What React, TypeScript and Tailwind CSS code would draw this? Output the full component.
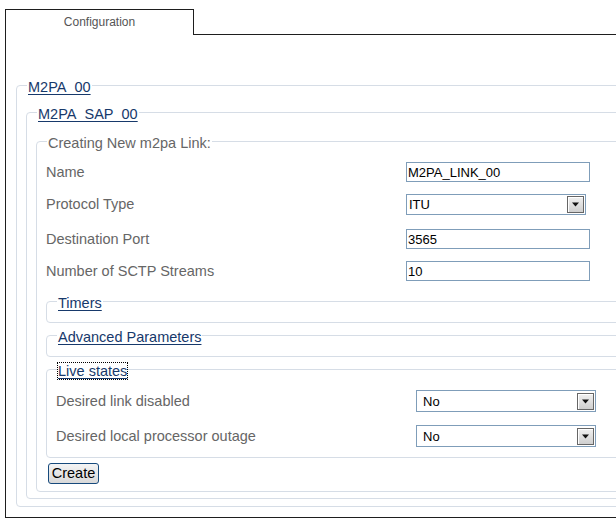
import React from "react";

function Fieldset({
  legend,
  link,
  focus,
  className,
  children,
}: {
  legend: string;
  link?: boolean;
  focus?: boolean;
  className?: string;
  children?: React.ReactNode;
}) {
  return (
    <fieldset className={"block border border-[#d6dde6] rounded-[4px] " + (className ?? "")}>
      <legend className="ml-[10px] px-[1px] pt-[3px] text-[14.5px] leading-[16px]">
        {link ? (
          <span
            className={
              "text-[#17396b] underline underline-offset-[2px] " +
              (focus ? "outline outline-1 outline-dotted outline-black" : "")
            }
          >
            {legend}
          </span>
        ) : (
          <span className="text-[#666]">{legend}</span>
        )}
      </legend>
      {children}
    </fieldset>
  );
}

function Arrow() {
  return (
    <div className="w-[17px] h-[17px] border border-[#666] bg-gradient-to-b from-[#f0f0f0] to-[#cfcfcf] shadow-[inset_1px_1px_0_#ffffff] flex items-center justify-center">
      <svg width="9" height="5" viewBox="0 0 9 5">
        <path d="M1 0.5 L8 0.5 L4.5 4.5 Z" fill="#111" />
      </svg>
    </div>
  );
}

function Input({ value }: { value: string }) {
  return (
    <div className="w-[184px] h-[20px] border border-[#7f9db9] bg-white flex items-center pl-[1px] text-[13px] leading-[15px] text-black">
      {value}
    </div>
  );
}

function Select({ value, h, w, pad }: { value: string; h: string; w: string; pad: string }) {
  return (
    <div className={"border border-[#7f9db9] bg-white flex items-center justify-between pr-[1px] text-[13px] leading-[15px] text-black " + h + " " + w + " " + pad}>
      <span>{value}</span>
      <Arrow />
    </div>
  );
}

function Row({ label, mt, children }: { label: string; mt: string; children: React.ReactNode }) {
  return (
    <div className={"flex items-center " + mt}>
      <div className="w-[360px] text-[14.5px] leading-[16px] text-[#666] -mt-[1px]">{label}</div>
      {children}
    </div>
  );
}

export default function App() {
  return (
    <div className="w-[616px] h-[528px] overflow-hidden bg-white pt-[9px] pl-[5px] font-['Liberation_Sans',Arial,sans-serif]">
      <div className="w-[900px]">
        <div className="flex">
          <div className="w-[189px] h-[26px] border-x border-t border-[#1e1e1e] text-center text-[12px] leading-[14px] pt-[5px] text-[#555]">
            Configuration
          </div>
          <div className="flex-1 h-[26px] border-b border-[#1e1e1e]" />
        </div>
        <div className="border-l border-b border-[#1e1e1e] pt-[41px] pl-[10px] pb-[10px]">
          <Fieldset legend="M2PA_00" link className="pb-[7px]">
            <div className="pt-[8px] pl-[9px]">
              <Fieldset legend="M2PA_SAP_00" link className="pb-[6px]">
                <div className="pt-[10px] pl-[9px]">
                  <Fieldset legend="Creating New m2pa Link:" className="pb-[6px]">
                    <div className="pl-[9px]">
                      <Row label="Name" mt="mt-[11px]">
                        <Input value="M2PA_LINK_00" />
                      </Row>
                      <Row label="Protocol Type" mt="mt-[12px]">
                        <Select value="ITU" h="h-[21px]" w="w-[180px]" pad="pl-[2px]" />
                      </Row>
                      <Row label="Destination Port" mt="mt-[14px]">
                        <Input value="3565" />
                      </Row>
                      <Row label="Number of SCTP Streams" mt="mt-[12px]">
                        <Input value="10" />
                      </Row>
                    </div>
                    <div className="pl-[9px]">
                      <Fieldset legend="Timers" link className="mt-[11px] pb-[11px]" />
                      <Fieldset legend="Advanced Parameters" link className="mt-[3px] pb-[11px]" />
                      <Fieldset legend="Live states" link focus className="mt-[3px] pb-[10px]">
                        <div className="pl-[9px]">
                          <Row label="Desired link disabled" mt="mt-[11px]">
                            <Select value="No" h="h-[22px]" w="w-[180px]" pad="pl-[6px]" />
                          </Row>
                          <Row label="Desired local processor outage" mt="mt-[13px]">
                            <Select value="No" h="h-[22px]" w="w-[180px]" pad="pl-[6px]" />
                          </Row>
                        </div>
                      </Fieldset>
                    </div>
                    <div className="pl-[11px] pt-[3px]">
                      <button className="w-[51px] h-[21px] border border-[#174a7c] rounded-[3px] bg-gradient-to-b from-[#f4f4f4] to-[#d9d9d9] text-[14.5px] leading-[16px] text-black">
                        Create
                      </button>
                    </div>
                  </Fieldset>
                </div>
              </Fieldset>
            </div>
          </Fieldset>
        </div>
      </div>
    </div>
  );
}
